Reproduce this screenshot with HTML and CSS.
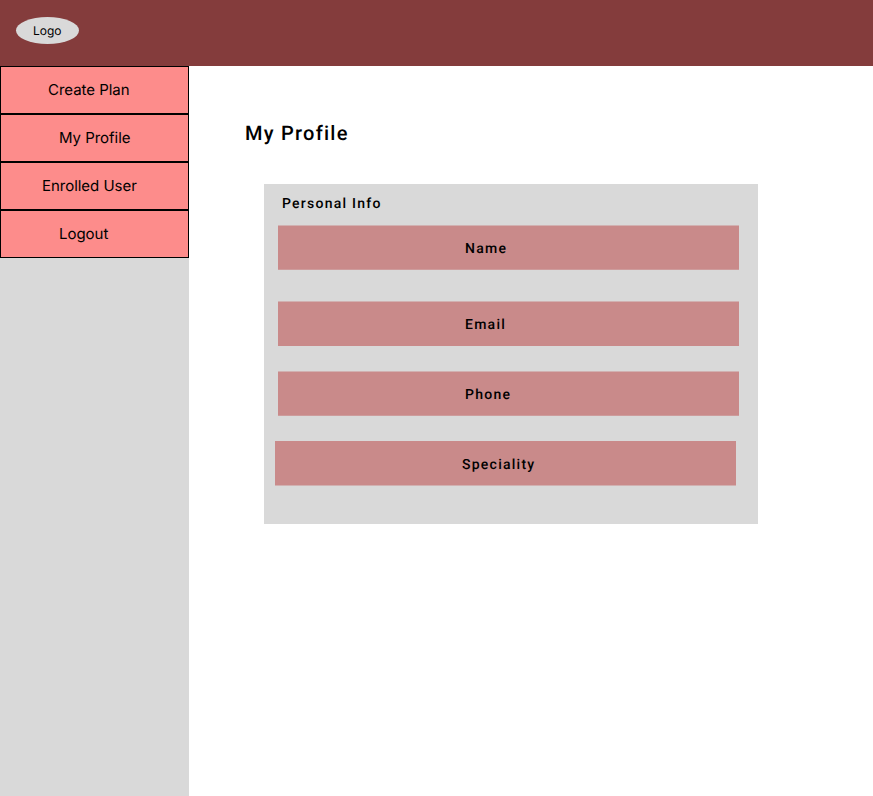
FILE: index.html
```html
<!DOCTYPE html>
<html lang="en">
<head>
<meta charset="utf-8">
<title>My Profile</title>
<link rel="stylesheet" href="styles.css">
</head>
<body>
<header class="topbar"><div class="logo">Logo</div></header>
<div class="layout">
  <nav class="sidebar">
    <a class="nav-item create">Create Plan</a>
    <a class="nav-item profile">My Profile</a>
    <a class="nav-item enrolled">Enrolled User</a>
    <a class="nav-item logout">Logout</a>
  </nav>
  <main class="content">
    <h1 class="title">My Profile</h1>
    <section class="card">
      <h2 class="card-title">Personal Info</h2>
      <div class="field name">Name</div>
      <div class="field email">Email</div>
      <div class="field phone">Phone</div>
      <div class="field speciality">Speciality</div>
    </section>
  </main>
</div>
</body>
</html>
```
FILE: styles.css
```css
* { box-sizing: border-box; }
body { margin: 0; background: #fff; color: #000; font-family: Inter, sans-serif; text-rendering: geometricPrecision; }
.topbar { height: 66px; padding: 17px 16px; background: #843c3c; }
.logo { width: 63px; height: 27px; padding-left: 17px; border-radius: 50%; background: #d9d9d9; font-size: 12px; line-height: 27px; }
.layout { display: flex; height: 730px; }
.sidebar { width: 189px; background: #d9d9d9; }
.nav-item { display: block; height: 48px; border: 1px solid #000; background: #fd8c8b; font-size: 15px; line-height: 46px; letter-spacing: -0.03px; }
.create { padding-left: 47px; }
.profile, .logout { padding-left: 58px; }
.enrolled { padding-left: 41px; }
.content { flex: 1; padding: 55px 0 0 56px; font-family: Roboto, sans-serif; }
.title { margin: 0; font-size: 20px; font-weight: 500; line-height: 24px; letter-spacing: 1.25px; }
.card { width: 494px; height: 340px; margin: 39px 0 0 19px; padding: 12px 14px 0; background: #d9d9d9; }
.card-title { margin: 0 0 13px 4px; font-size: 14px; font-weight: 500; line-height: 16px; letter-spacing: 1.25px; }
.field { width: 461px; height: 45px; padding-left: 187px; border: 0 solid #d1b1b1; border-top-width: 1px; background: #c98a8a; font-size: 14px; font-weight: 500; line-height: 46px; letter-spacing: 1.25px; }
.name, .phone { border-bottom: 1px solid #cd9c9c; }
.email { margin-top: 31px; }
.phone { margin-top: 25px; }
.speciality { margin: 25px 0 0 -3px; border-width: 0 0 1px; line-height: 48px; }
```
